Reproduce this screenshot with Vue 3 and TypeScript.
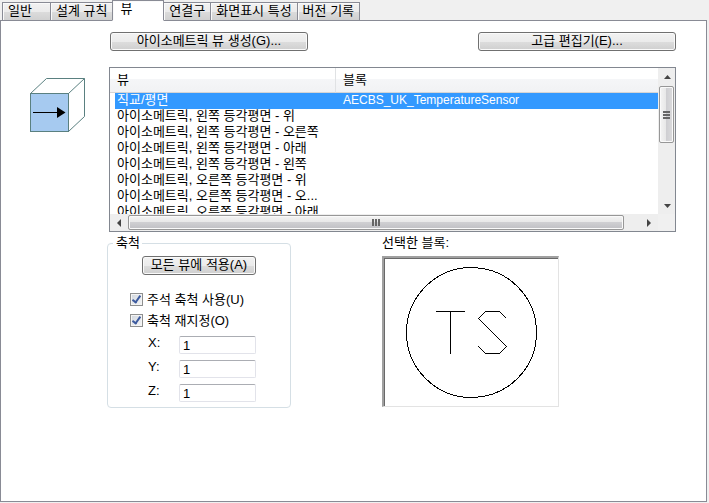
<script setup lang="ts">
import { ref } from 'vue'

interface ViewRow {
  view: string
  block: string
}

const tabs: string[] = ['일반', '설계 규칙', '뷰', '연결구', '화면표시 특성', '버전 기록']
const activeTab = ref(2)

const rows: ViewRow[] = [
  { view: '직교/평면', block: 'AECBS_UK_TemperatureSensor' },
  { view: '아이소메트릭, 왼쪽 등각평면 - 위', block: '' },
  { view: '아이소메트릭, 왼쪽 등각평면 - 오른쪽', block: '' },
  { view: '아이소메트릭, 왼쪽 등각평면 - 아래', block: '' },
  { view: '아이소메트릭, 왼쪽 등각평면 - 왼쪽', block: '' },
  { view: '아이소메트릭, 오른쪽 등각평면 - 위', block: '' },
  { view: '아이소메트릭, 오른쪽 등각평면 - 오...', block: '' },
  { view: '아이소메트릭, 오른쪽 등각평면 - 아래', block: '' },
]
const selectedRow = ref(0)

const annotationScale = ref(true)
const overrideScale = ref(true)
const axes = ref([
  { name: 'X', value: '1' },
  { name: 'Y', value: '1' },
  { name: 'Z', value: '1' },
])
</script>

<template>
  <div class="dialog">
    <nav class="tabs" role="tablist">
      <button
        v-for="(tab, i) in tabs"
        :key="tab"
        type="button"
        role="tab"
        class="tab"
        :class="{ active: i === activeTab }"
        :aria-selected="i === activeTab"
        @click="activeTab = i"
      >{{ tab }}</button>
    </nav>

    <main class="page">
      <div class="actions">
        <button type="button" class="btn wide">아이소메트릭 뷰 생성(G)...</button>
        <button type="button" class="btn wide">고급 편집기(E)...</button>
      </div>

      <div class="views">
        <svg class="cube" width="56" height="55" viewBox="0 0 56 55">
          <path d="M0.5 15.5 L16.5 0.5 M38.5 15.5 L54.5 0.5 M38.5 53.5 L54.5 38.5" fill="none" stroke="#5a8080" />
          <path d="M16.5 0.5 H54.5 V38.5" fill="none" stroke="#5a8080" />
          <rect x="0.5" y="15.5" width="38" height="38" fill="#a6caf0" stroke="#5a8080" />
          <path d="M3 34.5 H28" stroke="#000" />
          <path d="M27 29 L35.5 34.5 L27 40 Z" fill="#000" />
        </svg>

        <div class="list">
          <div class="viewport">
            <table>
              <colgroup>
                <col class="col-view" />
                <col />
              </colgroup>
              <thead>
                <tr>
                  <th scope="col">뷰</th>
                  <th scope="col">블록</th>
                </tr>
              </thead>
              <tbody>
                <tr
                  v-for="(row, i) in rows"
                  :key="row.view"
                  :class="{ selected: i === selectedRow }"
                  @click="selectedRow = i"
                >
                  <td>{{ row.view }}</td>
                  <td class="block">{{ row.block }}</td>
                </tr>
              </tbody>
            </table>
          </div>
          <div class="vbar">
            <svg width="16" height="18" viewBox="0 0 16 18"><path d="M5 11L8.500 7L12 11Z" fill="#444" /></svg>
            <div class="thumb vthumb"><i></i><i></i><i></i></div>
            <svg class="down" width="16" height="18" viewBox="0 0 16 18"><path d="M5 8H12L8.500 12Z" fill="#444" /></svg>
          </div>
          <div class="hbar">
            <svg width="18" height="16" viewBox="0 0 18 16"><path d="M11 4V12L7 8Z" fill="#444" /></svg>
            <div class="thumb hthumb"><i></i><i></i><i></i></div>
            <svg class="right" width="18" height="16" viewBox="0 0 18 16"><path d="M7 4V12L11 8Z" fill="#444" /></svg>
          </div>
          <div class="corner"></div>
        </div>
      </div>

      <div class="details">
        <fieldset class="scale">
          <legend>축척</legend>
          <button type="button" class="btn apply">모든 뷰에 적용(A)</button>
          <label class="check">
            <input v-model="annotationScale" type="checkbox" />
            <span>주석 축척 사용(U)</span>
          </label>
          <label class="check">
            <input v-model="overrideScale" type="checkbox" />
            <span>축척 재지정(O)</span>
          </label>
          <div class="axes">
            <div v-for="axis in axes" :key="axis.name" class="axis">
              <label :for="'scale-' + axis.name">{{ axis.name }}:</label>
              <input :id="'scale-' + axis.name" v-model="axis.value" type="text" />
            </div>
          </div>
        </fieldset>

        <section class="preview">
          <h2>선택한 블록:</h2>
          <div class="canvas">
            <svg width="174" height="148" viewBox="0 0 174 148" fill="none" stroke="#000" shape-rendering="crispEdges">
              <circle cx="87.500" cy="74.500" r="65" />
              <path d="M52 53.500H81M66.500 53V96" />
              <path d="M122.500 60.500L115.500 53.500H101.500L94.500 60.500L122.500 88.500L115.500 95.500H101.500L94.500 88.500" />
            </svg>
          </div>
        </section>
      </div>
    </main>
  </div>
</template>

<style>
body {
  margin: 0;
  background: #f0f0f0;
}
</style>

<style scoped>
.dialog {
  display: flex;
  flex-direction: column;
  box-sizing: border-box;
  min-height: 100vh;
  padding: 0 2px 1px 0;
  background: #f0f0f0;
  color: #000;
  font: 13px/16px "Liberation Sans", "Noto Sans CJK KR", sans-serif;
}

button,
input {
  font: inherit;
  color: inherit;
}

.tabs {
  display: flex;
  align-items: flex-end;
  height: 21px;
  padding-left: 2px;
  margin-bottom: -1px;
}

.tab {
  box-sizing: border-box;
  height: 19px;
  margin-right: -1px;
  padding: 0 5px 1px;
  border: 1px solid #898b95;
  background: linear-gradient(#f2f2f2, #ebebeb 50%, #dcdcdc 51%, #d0d0d0);
  box-shadow: inset 1px 1px #fafafa;
  text-align: left;
  white-space: nowrap;
}

.tab:first-child {
  padding-right: 18px;
}

.tab.active {
  height: 21px;
  padding: 0 31px 4px 7px;
  border-bottom-color: #fff;
  background: #fff;
  z-index: 1;
}

.page {
  flex: 1;
  padding: 11px 30px 12px 29px;
  border: 1px solid #898b95;
  background: #fff;
}

.actions {
  display: flex;
  justify-content: space-between;
  gap: 16px;
  padding-left: 80px;
}

.btn {
  box-sizing: border-box;
  height: 19px;
  padding: 0 6px 1px;
  border: 1px solid #707070;
  border-radius: 3px;
  background: linear-gradient(#f2f2f2, #ebebeb 50%, #dddddd 51%, #cfcfcf);
  box-shadow: inset 0 0 0 1px #fafafa;
  line-height: 16px;
  white-space: nowrap;
}

.wide {
  width: 198px;
}

.views {
  display: flex;
  align-items: flex-start;
  gap: 23px;
  margin-top: 16px;
}

.cube {
  flex: none;
  margin-top: 11px;
}

.list {
  flex: 1;
  display: grid;
  grid-template-columns: 1fr 17px;
  grid-template-rows: 146px 17px;
  min-width: 0;
  border: 1px solid #828790;
  background: #fff;
}

.viewport {
  overflow: hidden;
}

table {
  width: 100%;
  border-collapse: separate;
  border-spacing: 0;
  table-layout: fixed;
}

.col-view {
  width: 226px;
}

th,
td {
  padding: 0 0 0 7px;
  font-weight: normal;
  text-align: left;
  white-space: nowrap;
}

th {
  height: 24px;
  border-right: 1px solid #e0e2e4;
  border-bottom: 1px solid #d5d5d5;
  background: linear-gradient(#fff 45%, #f5f6f8 46%, #f1f2f4);
}

th:last-child {
  border-right: 0;
}

td {
  padding-bottom: 2px;
  line-height: 14px;
}

.block {
  font-size: 12px;
}

.selected td {
  background: #3399ff;
  color: #fff;
}

.selected td:first-child {
  box-shadow: inset 5px 0 #fff;
}

.vbar,
.hbar {
  display: flex;
  align-items: center;
  background: #eee;
}

.vbar {
  flex-direction: column;
}

.corner {
  background: #f0f0f0;
}

.thumb {
  box-sizing: border-box;
  display: flex;
  align-items: center;
  justify-content: center;
  gap: 1px;
  border: 1px solid #979797;
  border-radius: 2px;
  box-shadow: inset 0 0 0 1px #fafafa;
}

.vthumb {
  flex-direction: column;
  width: 15px;
  height: 57px;
  background: linear-gradient(90deg, #f4f4f4, #e8e8e8 45%, #cfcfd2 50%, #dcdcde);
}

.hthumb {
  width: 496px;
  height: 15px;
  flex: 0 1 496px;
  background: linear-gradient(#f4f4f4, #e8e8e8 45%, #cfcfd2 50%, #c0c0c4);
}

.vthumb i {
  width: 7px;
  height: 2px;
  background: #666;
}

.hthumb i {
  width: 2px;
  height: 7px;
  background: #666;
}

.down {
  margin-top: auto;
}

.right {
  margin-left: auto;
}

.details {
  display: flex;
  align-items: flex-start;
  gap: 91px;
  margin-top: 3px;
  padding-left: 77px;
}

.scale {
  box-sizing: border-box;
  width: 184px;
  min-width: 0;
  margin: 0;
  padding: 5px 22px;
  border: 1px solid #d5dfe5;
  border-radius: 4px;
}

legend {
  margin-left: -17px;
  padding: 0 2px 0 3px;
}

.apply {
  display: block;
  width: 114px;
  margin: 0 0 14px 12px;
}

.check {
  display: flex;
  align-items: center;
  gap: 4px;
  height: 21px;
  white-space: nowrap;
}

.check input {
  appearance: none;
  box-sizing: border-box;
  width: 13px;
  height: 13px;
  margin: 0;
  border: 1px solid #8e8f8f;
  background: linear-gradient(135deg, #cfd5dd, #f6f6f6);
  box-shadow: inset 0 0 0 1px #f4f4f4;
}

.check input:checked::before {
  content: "";
  display: block;
  box-sizing: border-box;
  width: 5px;
  height: 9px;
  margin: 0 0 0 3px;
  border: solid #3c5a9e;
  border-width: 0 2px 2px 0;
  transform: rotate(35deg);
}

.axes {
  display: grid;
  gap: 6px;
  padding: 5px 0 0 18px;
}

.axis {
  display: grid;
  grid-template-columns: 31px 77px;
}

.axis label {
  line-height: 14px;
}

.axis input {
  box-sizing: border-box;
  width: 77px;
  height: 18px;
  padding: 0 3px;
  border: 1px solid #e2e3ea;
  border-top-color: #abadb3;
  border-radius: 2px;
  background: #fff;
}

h2 {
  margin: 0;
  font: inherit;
}

.canvas {
  width: 174px;
  height: 148px;
  margin-top: 5px;
  border: 2px solid #a0a0a0;
  border-right: 1px solid #e3e3e3;
  border-bottom: 1px solid #e3e3e3;
  box-shadow: inset 1px 1px #696969;
}

.canvas svg {
  display: block;
}
</style>
